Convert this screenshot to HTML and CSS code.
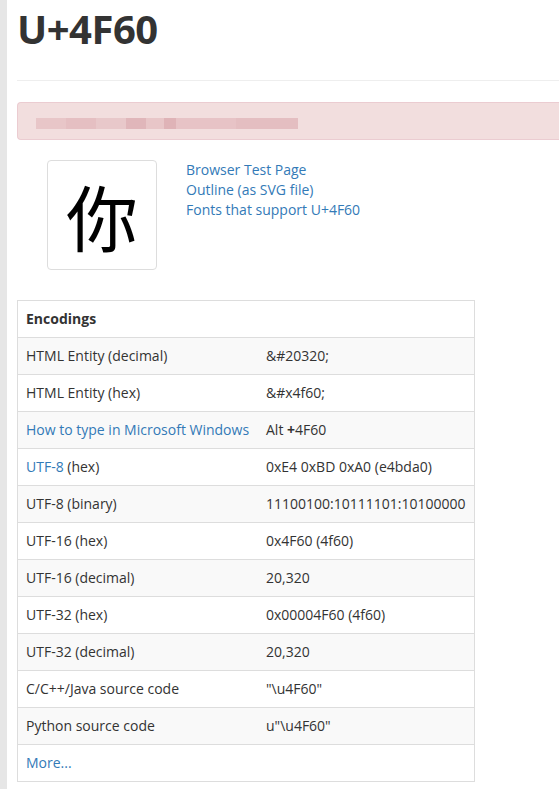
FILE: index.html
```html
<!DOCTYPE html>
<html lang="en">

<head>
    <meta charset="UTF-8">
    <meta name="viewport" content="width=device-width, initial-scale=1.0">
    <title>U+4F60</title>
    <link rel="stylesheet" href="styles.css">
</head>

<body>
    <div id="page">
        <h1>U+4F60</h1>
        <hr>

        <div class="alert">
            <div class="alert-text"></div>
        </div>

        <div class="char-row">
            <div class="char-box">你</div>
            <ul class="char-links">
                <li><a href="#">Browser Test Page</a></li>
                <li><a href="#">Outline (as SVG file)</a></li>
                <li><a href="#">Fonts that support U+4F60</a></li>
            </ul>
        </div>

        <table class="enc">
            <thead>
                <tr><th colspan="2">Encodings</th></tr>
            </thead>
            <tbody>
                <tr><td>HTML Entity (decimal)</td><td>&amp;#20320;</td></tr>
                <tr><td>HTML Entity (hex)</td><td>&amp;#x4f60;</td></tr>
                <tr><td><a href="#">How to type in Microsoft Windows</a></td><td>Alt <b>+</b>4F60</td></tr>
                <tr><td><a href="#">UTF-8</a> (hex)</td><td>0xE4 0xBD 0xA0 (e4bda0)</td></tr>
                <tr><td>UTF-8 (binary)</td><td>11100100:10111101:10100000</td></tr>
                <tr><td>UTF-16 (hex)</td><td>0x4F60 (4f60)</td></tr>
                <tr><td>UTF-16 (decimal)</td><td>20,320</td></tr>
                <tr><td>UTF-32 (hex)</td><td>0x00004F60 (4f60)</td></tr>
                <tr><td>UTF-32 (decimal)</td><td>20,320</td></tr>
                <tr><td>C/C++/Java source code</td><td>"\u4F60"</td></tr>
                <tr><td>Python source code</td><td>u"\u4F60"</td></tr>
                <tr><td colspan="2"><a href="#">More...</a></td></tr>
            </tbody>
        </table>
    </div>
</body>

</html>
```

FILE: styles.css
```css
body {
    font-family: 'Open Sans', 'Liberation Sans', sans-serif;
    font-size: 14px;
    line-height: 20px;
    color: #333;
    margin: 0;
    padding: 0;
    background: #fff;
    border-left: 7px solid #e6e6e6;
    min-height: 789px;
    box-sizing: border-box;
}

#page {
    padding: 0 0 0 10px;
}

h1 {
    font-size: 40px;
    font-weight: 700;
    line-height: 50px;
    margin: 4px 0 0 0;
    letter-spacing: -0.5px;
}

hr {
    border: 0;
    border-top: 1px solid #eee;
    margin: 26px 0 21px 0;
}

a {
    color: #337ab7;
    text-decoration: none;
}

.alert {
    height: 36px;
    background-color: #f2dede;
    border: 1px solid #ebccd1;
    border-right: 0;
    border-radius: 4px 0 0 4px;
    position: relative;
}

.alert-text {
    position: absolute;
    left: 18px;
    top: 15px;
    width: 262px;
    height: 11px;
    background: linear-gradient(to right,
        #e8c6c8 0, #e8c6c8 30px, #e5bfc2 30px, #e5bfc2 60px,
        #e8c8ca 60px, #e8c8ca 90px, #e0b6ba 90px, #e0b6ba 110px,
        #e8c6c8 110px, #e8c6c8 128px, #dfb3b7 128px, #dfb3b7 140px,
        #e7c3c6 140px, #e7c3c6 200px, #e4bec1 200px, #e4bec1 262px);
}

.char-row {
    display: flex;
    margin-top: 20px;
    padding-left: 30px;
}

.char-box {
    width: 108px;
    height: 108px;
    border: 1px solid #ddd;
    border-radius: 4px;
    display: flex;
    align-items: center;
    justify-content: center;
    font-family: 'Noto Sans CJK SC', sans-serif;
    font-size: 72px;
    line-height: 1;
    color: #000;
}

.char-links {
    list-style: none;
    margin: 0;
    padding: 0 0 0 29px;
    line-height: 20px;
}

.enc {
    margin-top: 30px;
    width: 458px;
    border-collapse: collapse;
    border: 1px solid #ddd;
}

.enc th,
.enc td {
    text-align: left;
    padding: 8px 8px;
    border-top: 1px solid #ddd;
    height: 20px;
    vertical-align: top;
}

.enc th {
    font-weight: 700;
}

.enc td:first-child {
    width: 224px;
}

.enc tbody tr:nth-child(odd) {
    background-color: #f9f9f9;
}

.enc tbody tr:last-child {
    background-color: #fff;
}
```
